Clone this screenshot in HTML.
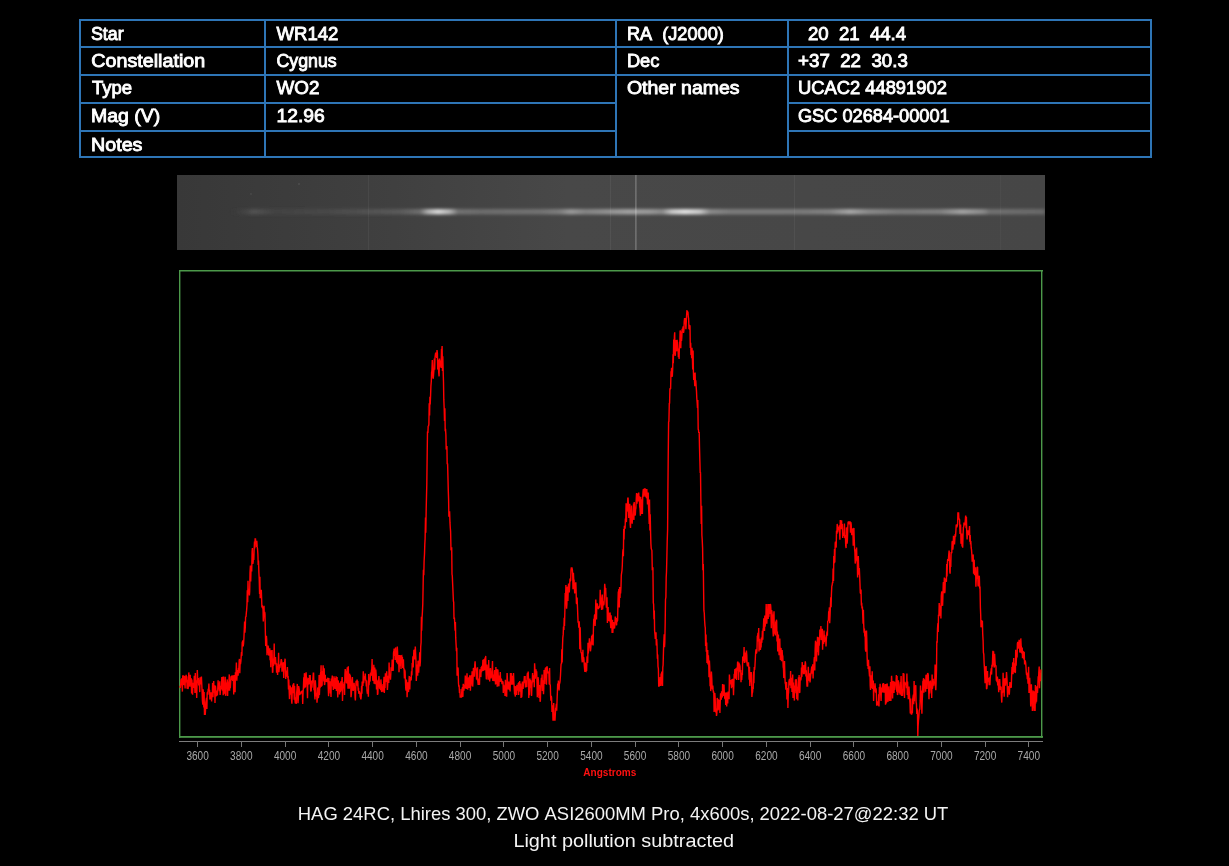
<!DOCTYPE html>
<html><head><meta charset="utf-8"><style>
html,body{margin:0;padding:0;background:#000;}
svg{display:block;font-family:"Liberation Sans",sans-serif;will-change:transform;}
</style></head><body>
<svg width="1229" height="866" viewBox="0 0 1229 866">
<rect width="1229" height="866" fill="#000"/>
<rect x="79" y="19" width="1073" height="2" fill="#2e75b6"/><rect x="79" y="46" width="1073" height="2" fill="#2e75b6"/><rect x="79" y="74" width="1073" height="2" fill="#2e75b6"/><rect x="79" y="102" width="538" height="2" fill="#2e75b6"/><rect x="787" y="102" width="365" height="2" fill="#2e75b6"/><rect x="79" y="130" width="538" height="2" fill="#2e75b6"/><rect x="787" y="130" width="365" height="2" fill="#2e75b6"/><rect x="79" y="156" width="1073" height="2" fill="#2e75b6"/><rect x="79" y="19" width="2" height="139" fill="#2e75b6"/><rect x="264" y="19" width="2" height="139" fill="#2e75b6"/><rect x="615" y="19" width="2" height="139" fill="#2e75b6"/><rect x="787" y="19" width="2" height="139" fill="#2e75b6"/><rect x="1150" y="19" width="2" height="139" fill="#2e75b6"/>
<text x="91.0" y="39.7" font-size="18" font-weight="normal" fill="#fff" text-anchor="start" textLength="32.62" lengthAdjust="spacingAndGlyphs" stroke="#fff" stroke-width="0.85">Star</text><text x="91.3" y="66.8" font-size="18" font-weight="normal" fill="#fff" text-anchor="start" textLength="113.9" lengthAdjust="spacingAndGlyphs" stroke="#fff" stroke-width="0.85">Constellation</text><text x="92.0" y="94.4" font-size="18" font-weight="normal" fill="#fff" text-anchor="start" textLength="40.08" lengthAdjust="spacingAndGlyphs" stroke="#fff" stroke-width="0.85">Type</text><text x="91.0" y="122.0" font-size="18" font-weight="normal" fill="#fff" text-anchor="start" textLength="69.21" lengthAdjust="spacingAndGlyphs" stroke="#fff" stroke-width="0.85">Mag&#160;(V)</text><text x="91.0" y="150.6" font-size="18" font-weight="normal" fill="#fff" text-anchor="start" textLength="51.43" lengthAdjust="spacingAndGlyphs" stroke="#fff" stroke-width="0.85">Notes</text><text x="276.5" y="39.7" font-size="18" font-weight="normal" fill="#fff" text-anchor="start" textLength="61.89" lengthAdjust="spacingAndGlyphs" stroke="#fff" stroke-width="0.85">WR142</text><text x="276.5" y="66.8" font-size="18" font-weight="normal" fill="#fff" text-anchor="start" textLength="60.25" lengthAdjust="spacingAndGlyphs" stroke="#fff" stroke-width="0.85">Cygnus</text><text x="276.5" y="94.4" font-size="18" font-weight="normal" fill="#fff" text-anchor="start" textLength="42.89" lengthAdjust="spacingAndGlyphs" stroke="#fff" stroke-width="0.85">WO2</text><text x="276.5" y="122.0" font-size="18" font-weight="normal" fill="#fff" text-anchor="start" textLength="48.22" lengthAdjust="spacingAndGlyphs" stroke="#fff" stroke-width="0.85">12.96</text><text x="626.9" y="39.7" font-size="18" font-weight="normal" fill="#fff" text-anchor="start" textLength="96.91" lengthAdjust="spacingAndGlyphs" stroke="#fff" stroke-width="0.85">RA&#160;&#160;(J2000)</text><text x="626.9" y="66.8" font-size="18" font-weight="normal" fill="#fff" text-anchor="start" textLength="32.53" lengthAdjust="spacingAndGlyphs" stroke="#fff" stroke-width="0.85">Dec</text><text x="626.9" y="94.4" font-size="18" font-weight="normal" fill="#fff" text-anchor="start" textLength="112.67" lengthAdjust="spacingAndGlyphs" stroke="#fff" stroke-width="0.85">Other&#160;names</text><text x="807.9" y="39.7" font-size="18" font-weight="normal" fill="#fff" text-anchor="start" textLength="98.21" lengthAdjust="spacingAndGlyphs" stroke="#fff" stroke-width="0.85">20&#160;&#160;21&#160;&#160;44.4</text><text x="798.1" y="66.8" font-size="18" font-weight="normal" fill="#fff" text-anchor="start" textLength="109.71" lengthAdjust="spacingAndGlyphs" stroke="#fff" stroke-width="0.85">+37&#160;&#160;22&#160;&#160;30.3</text><text x="797.9" y="94.4" font-size="18" font-weight="normal" fill="#fff" text-anchor="start" textLength="149.0" lengthAdjust="spacingAndGlyphs" stroke="#fff" stroke-width="0.85">UCAC2&#160;44891902</text><text x="797.9" y="122.0" font-size="18" font-weight="normal" fill="#fff" text-anchor="start" textLength="151.79" lengthAdjust="spacingAndGlyphs" stroke="#fff" stroke-width="0.85">GSC&#160;02684-00001</text><text x="297.8" y="820" font-size="18.4" font-weight="normal" fill="#f4f4f4" text-anchor="start" textLength="650.56" lengthAdjust="spacingAndGlyphs">HAG&#160;24RC,&#160;Lhires&#160;300,&#160;ZWO&#160;ASI2600MM&#160;Pro,&#160;4x600s,&#160;2022-08-27@22:32&#160;UT</text><text x="513.4" y="847" font-size="18.4" font-weight="normal" fill="#f4f4f4" text-anchor="start" textLength="220.63" lengthAdjust="spacingAndGlyphs">Light&#160;pollution&#160;subtracted</text>

<defs>
 <linearGradient id="bg" x1="0" x2="1" y1="0" y2="0">
  <stop offset="0" stop-color="#383838"/>
  <stop offset="0.25" stop-color="#404040"/>
  <stop offset="0.45" stop-color="#484848"/>
  <stop offset="1" stop-color="#464646"/>
 </linearGradient>
 <linearGradient id="band" x1="0" x2="1" y1="0" y2="0" gradientUnits="objectBoundingBox"><stop offset="0.0000" stop-color="#3a3a3a" stop-opacity="0"/><stop offset="0.0611" stop-color="#3e3e3e" stop-opacity="0.0"/><stop offset="0.0887" stop-color="#585858" stop-opacity="0.8"/><stop offset="0.1129" stop-color="#484848" stop-opacity="0.6"/><stop offset="0.1763" stop-color="#4c4c4c" stop-opacity="0.8"/><stop offset="0.2569" stop-color="#5a5a5a" stop-opacity="1"/><stop offset="0.2800" stop-color="#6e6e6e" stop-opacity="1"/><stop offset="0.2892" stop-color="#b0b0b0" stop-opacity="1"/><stop offset="0.3007" stop-color="#d8d8d8" stop-opacity="1"/><stop offset="0.3145" stop-color="#b0b0b0" stop-opacity="1"/><stop offset="0.3237" stop-color="#727272" stop-opacity="1"/><stop offset="0.3491" stop-color="#6c6c6c" stop-opacity="1"/><stop offset="0.4182" stop-color="#727272" stop-opacity="1"/><stop offset="0.4412" stop-color="#7e7e7e" stop-opacity="1"/><stop offset="0.4539" stop-color="#9a9a9a" stop-opacity="1"/><stop offset="0.4700" stop-color="#848484" stop-opacity="1"/><stop offset="0.4873" stop-color="#8c8c8c" stop-opacity="1"/><stop offset="0.5196" stop-color="#a0a0a0" stop-opacity="1"/><stop offset="0.5449" stop-color="#989898" stop-opacity="1"/><stop offset="0.5588" stop-color="#8a8a8a" stop-opacity="1"/><stop offset="0.5703" stop-color="#c8c8c8" stop-opacity="1"/><stop offset="0.5853" stop-color="#e0e0e0" stop-opacity="1"/><stop offset="0.6025" stop-color="#c8c8c8" stop-opacity="1"/><stop offset="0.6141" stop-color="#8a8a8a" stop-opacity="1"/><stop offset="0.6371" stop-color="#7c7c7c" stop-opacity="1"/><stop offset="0.7177" stop-color="#7a7a7a" stop-opacity="1"/><stop offset="0.7523" stop-color="#828282" stop-opacity="1"/><stop offset="0.7753" stop-color="#a6a6a6" stop-opacity="1"/><stop offset="0.7961" stop-color="#8a8a8a" stop-opacity="1"/><stop offset="0.8329" stop-color="#7a7a7a" stop-opacity="1"/><stop offset="0.8790" stop-color="#808080" stop-opacity="1"/><stop offset="0.9044" stop-color="#a2a2a2" stop-opacity="1"/><stop offset="0.9286" stop-color="#8a8a8a" stop-opacity="1"/><stop offset="0.9366" stop-color="#707070" stop-opacity="1"/><stop offset="1.0000" stop-color="#686868" stop-opacity="1"/></linearGradient>
 <filter id="b2" x="-10%" y="-300%" width="120%" height="700%"><feGaussianBlur stdDeviation="1.6"/></filter>
 <clipPath id="sc"><rect x="177" y="175" width="868" height="75"/></clipPath>
</defs>
<rect x="177" y="175" width="868" height="75" fill="url(#bg)"/>
<g clip-path="url(#sc)">
 <rect x="177" y="209" width="868" height="5.5" fill="url(#band)" filter="url(#b2)"/>
 <rect x="635.3" y="175" width="1.2" height="75" fill="#fff" fill-opacity="0.3"/>
 <rect x="610" y="175" width="1" height="75" fill="#fff" fill-opacity="0.06"/>
 <rect x="368" y="175" width="1" height="75" fill="#fff" fill-opacity="0.05"/>
 <rect x="794" y="175" width="1" height="75" fill="#fff" fill-opacity="0.05"/>
 <rect x="1000" y="175" width="1" height="75" fill="#fff" fill-opacity="0.03"/>
 <circle cx="251" cy="194" r="0.9" fill="#4a4a4a"/>
 <circle cx="299" cy="184" r="1" fill="#4e4e4e"/>
</g>


<g fill="#4c994a"><rect x="179" y="270" width="864" height="1.5"/><rect x="179" y="736" width="864" height="1.8"/><rect x="179" y="270" width="1.4" height="467.8"/><rect x="1041" y="270" width="1.4" height="467.8"/></g>
<polyline points="180.0,686.0 180.3,688.0 180.7,684.3 181.0,679.2 181.4,682.5 181.7,678.4 182.0,682.8 182.4,691.6 182.7,676.5 183.1,675.3 183.4,684.7 183.7,684.5 184.1,683.2 184.4,675.9 184.8,681.8 185.1,688.5 185.4,676.3 185.8,682.4 186.1,674.9 186.5,680.1 186.8,676.2 187.1,688.8 187.5,679.8 187.8,688.9 188.2,688.2 188.5,683.3 188.8,672.4 189.2,679.7 189.5,683.9 189.9,686.7 190.2,674.8 190.5,683.3 190.9,678.2 191.2,678.8 191.6,693.5 191.9,679.6 192.2,687.9 192.6,694.7 192.9,682.8 193.3,687.6 193.6,686.9 193.9,686.5 194.3,675.8 194.6,683.7 195.0,693.0 195.3,672.9 195.6,692.8 196.0,687.4 196.3,680.3 196.7,698.0 197.0,686.8 197.3,670.1 197.7,679.6 198.0,683.2 198.4,678.0 198.7,685.5 199.0,679.7 199.4,684.3 199.7,692.1 200.1,677.2 200.4,682.7 200.7,678.4 201.1,684.5 201.4,676.5 201.8,684.8 202.1,691.6 202.4,700.4 202.8,704.8 203.1,689.3 203.5,694.9 203.8,707.4 204.1,691.9 204.5,715.0 204.8,707.2 205.2,715.0 205.5,710.6 205.8,702.4 206.2,699.8 206.5,697.9 206.9,709.1 207.2,693.1 207.5,692.0 207.9,694.6 208.2,688.8 208.6,689.9 208.9,683.6 209.2,691.2 209.6,689.8 209.9,699.6 210.3,696.1 210.6,692.3 210.9,697.2 211.3,692.8 211.6,701.5 212.0,692.3 212.3,696.6 212.6,682.9 213.0,697.3 213.3,684.7 213.7,681.0 214.0,692.8 214.3,685.3 214.7,690.2 215.0,703.0 215.4,685.5 215.7,688.1 216.0,695.5 216.4,696.3 216.7,691.2 217.1,691.1 217.4,695.4 217.7,690.5 218.1,680.4 218.4,686.9 218.8,689.3 219.1,683.3 219.4,691.2 219.8,681.2 220.1,695.0 220.5,690.0 220.8,689.6 221.1,685.9 221.5,688.8 221.8,677.1 222.2,681.8 222.5,690.7 222.8,676.7 223.2,695.2 223.5,676.5 223.9,694.3 224.2,683.5 224.5,693.5 224.9,690.0 225.2,676.7 225.6,695.7 225.9,694.8 226.2,682.7 226.6,683.3 226.9,683.2 227.3,679.4 227.6,696.0 227.9,686.3 228.3,690.7 228.6,683.7 229.0,680.9 229.3,674.4 229.6,690.8 230.0,680.6 230.3,688.1 230.7,682.0 231.0,676.3 231.3,678.3 231.7,675.6 232.0,680.0 232.4,678.1 232.7,680.8 233.0,675.3 233.4,678.2 233.7,694.5 234.1,676.7 234.4,675.0 234.7,686.0 235.1,692.3 235.4,672.2 235.8,678.8 236.1,671.8 236.4,662.4 236.8,680.7 237.1,674.1 237.5,675.2 237.8,670.1 238.1,675.8 238.5,668.0 238.8,669.8 239.2,660.3 239.5,658.9 239.8,673.3 240.2,660.6 240.5,664.2 240.9,661.3 241.2,656.1 241.5,652.0 241.9,655.9 242.2,642.7 242.6,641.6 242.9,640.3 243.2,646.3 243.6,643.3 243.9,638.3 244.3,629.1 244.6,621.6 244.9,632.8 245.3,627.3 245.6,616.5 246.0,617.0 246.3,613.1 246.6,610.4 247.0,604.8 247.3,590.3 247.7,602.2 248.0,580.7 248.3,593.1 248.7,588.9 249.0,590.5 249.4,595.5 249.7,591.2 250.0,572.6 250.4,565.6 250.7,581.5 251.1,566.8 251.4,569.1 251.7,571.6 252.1,551.9 252.4,548.0 252.8,563.9 253.1,562.4 253.4,559.3 253.8,559.9 254.1,550.5 254.5,541.5 254.8,548.4 255.1,539.0 255.5,539.0 255.8,542.2 256.2,540.7 256.5,547.0 256.8,540.9 257.2,546.9 257.5,548.5 257.9,554.3 258.2,565.1 258.5,560.5 258.9,572.8 259.2,578.5 259.6,594.0 259.9,576.8 260.2,598.3 260.6,593.5 260.9,596.4 261.3,589.7 261.6,597.9 261.9,607.4 262.3,605.2 262.6,608.0 263.0,608.3 263.3,621.5 263.6,617.8 264.0,605.7 264.3,616.7 264.7,611.8 265.0,614.0 265.3,629.4 265.7,646.1 266.0,641.0 266.4,635.9 266.7,639.7 267.0,655.2 267.4,648.7 267.7,648.4 268.1,645.5 268.4,647.9 268.7,655.4 269.1,654.6 269.4,654.3 269.8,648.3 270.1,660.2 270.4,654.4 270.8,667.3 271.1,650.3 271.5,658.9 271.8,658.6 272.1,650.0 272.5,672.7 272.8,672.0 273.2,658.5 273.5,665.9 273.8,661.4 274.2,643.4 274.5,659.9 274.9,661.5 275.2,664.4 275.5,657.1 275.9,663.5 276.2,663.1 276.6,672.6 276.9,666.6 277.2,666.6 277.6,675.0 277.9,663.5 278.3,664.2 278.6,652.8 278.9,672.1 279.3,667.9 279.6,667.7 280.0,667.2 280.3,664.3 280.6,664.9 281.0,660.9 281.3,659.1 281.7,661.1 282.0,671.8 282.3,668.0 282.7,664.6 283.0,662.5 283.4,663.0 283.7,677.9 284.0,669.3 284.4,664.2 284.7,662.2 285.1,658.7 285.4,668.6 285.7,678.9 286.1,670.5 286.4,671.6 286.8,672.4 287.1,676.6 287.4,667.0 287.8,678.3 288.1,676.0 288.5,689.4 288.8,679.4 289.1,689.5 289.5,699.1 289.8,687.0 290.2,685.6 290.5,694.5 290.8,693.5 291.2,687.2 291.5,698.9 291.9,703.8 292.2,691.6 292.5,690.0 292.9,684.6 293.2,693.1 293.6,683.2 293.9,685.4 294.2,699.7 294.6,685.9 294.9,699.2 295.3,703.5 295.6,697.2 295.9,699.6 296.3,703.9 296.6,693.3 297.0,689.2 297.3,683.9 297.6,692.5 298.0,703.3 298.3,699.1 298.7,686.1 299.0,687.8 299.3,690.1 299.7,695.2 300.0,692.5 300.4,693.5 300.7,694.2 301.0,692.6 301.4,691.2 301.7,693.1 302.1,691.0 302.4,690.6 302.7,703.9 303.1,691.9 303.4,687.5 303.8,677.2 304.1,688.6 304.4,673.3 304.8,674.6 305.1,687.3 305.5,686.6 305.8,680.2 306.1,672.2 306.5,680.9 306.8,677.3 307.2,687.8 307.5,698.3 307.8,683.9 308.2,679.7 308.5,678.1 308.9,683.9 309.2,684.1 309.5,675.0 309.9,682.6 310.2,675.0 310.6,689.9 310.9,691.0 311.2,690.8 311.6,680.5 311.9,687.8 312.3,682.8 312.6,680.9 312.9,679.4 313.3,673.1 313.6,673.1 314.0,690.3 314.3,687.0 314.6,693.3 315.0,699.5 315.3,680.2 315.7,686.2 316.0,692.6 316.3,696.3 316.7,693.1 317.0,702.7 317.4,697.3 317.7,688.3 318.0,687.5 318.4,698.1 318.7,695.5 319.1,675.0 319.4,695.0 319.7,687.4 320.1,687.4 320.4,674.4 320.8,671.9 321.1,665.3 321.4,686.7 321.8,671.7 322.1,685.7 322.5,671.0 322.8,676.2 323.1,665.3 323.5,671.1 323.8,681.4 324.2,668.2 324.5,685.0 324.8,683.8 325.2,674.8 325.5,679.3 325.9,680.2 326.2,681.8 326.5,679.7 326.9,679.0 327.2,682.1 327.6,679.2 327.9,677.7 328.2,687.2 328.6,696.3 328.9,678.0 329.3,687.9 329.6,684.1 329.9,681.3 330.3,693.6 330.6,685.2 331.0,696.9 331.3,678.5 331.6,685.5 332.0,679.0 332.3,675.6 332.7,686.5 333.0,683.1 333.3,690.0 333.7,685.4 334.0,676.2 334.4,683.5 334.7,684.0 335.0,689.0 335.4,678.0 335.7,684.8 336.1,676.2 336.4,691.0 336.7,679.4 337.1,677.0 337.4,689.0 337.8,697.4 338.1,680.3 338.4,682.4 338.8,686.1 339.1,683.6 339.5,694.4 339.8,684.3 340.1,682.9 340.5,692.2 340.8,681.3 341.2,690.7 341.5,682.2 341.8,680.7 342.2,677.0 342.5,700.9 342.9,686.4 343.2,688.5 343.5,683.7 343.9,685.3 344.2,681.9 344.6,695.1 344.9,674.9 345.2,669.1 345.6,672.8 345.9,671.2 346.3,682.4 346.6,683.3 346.9,672.5 347.3,667.2 347.6,675.9 348.0,688.7 348.3,666.2 348.6,683.4 349.0,673.6 349.3,688.7 349.7,673.8 350.0,681.9 350.3,675.2 350.7,679.9 351.0,697.2 351.4,693.6 351.7,684.9 352.0,683.2 352.4,677.1 352.7,686.6 353.1,690.9 353.4,690.0 353.7,688.2 354.1,682.7 354.4,687.3 354.8,687.6 355.1,697.8 355.4,700.4 355.8,686.8 356.1,680.8 356.5,685.3 356.8,682.7 357.1,679.6 357.5,686.3 357.8,681.0 358.2,690.8 358.5,687.9 358.8,693.8 359.2,691.2 359.5,691.8 359.9,693.4 360.2,697.5 360.5,697.1 360.9,699.4 361.2,696.6 361.6,685.7 361.9,693.7 362.2,681.6 362.6,685.1 362.9,686.0 363.3,671.3 363.6,683.2 363.9,680.9 364.3,677.5 364.6,677.0 365.0,677.7 365.3,673.5 365.6,680.2 366.0,680.3 366.3,686.4 366.7,680.4 367.0,690.7 367.3,692.9 367.7,692.6 368.0,689.6 368.4,696.8 368.7,674.1 369.0,685.3 369.4,681.0 369.7,681.3 370.1,681.0 370.4,673.3 370.7,673.2 371.1,675.8 371.4,670.9 371.8,668.6 372.1,659.1 372.4,672.7 372.8,680.8 373.1,679.4 373.5,676.2 373.8,664.7 374.1,683.7 374.5,679.2 374.8,667.4 375.2,684.3 375.5,670.3 375.8,669.6 376.2,674.9 376.5,689.4 376.9,679.7 377.2,685.5 377.5,694.9 377.9,693.5 378.2,681.6 378.6,680.7 378.9,676.1 379.2,680.7 379.6,688.6 379.9,688.2 380.3,683.5 380.6,690.3 380.9,679.4 381.3,685.6 381.6,692.0 382.0,690.0 382.3,691.7 382.6,688.6 383.0,684.1 383.3,691.7 383.7,682.6 384.0,676.8 384.3,693.0 384.7,685.9 385.0,688.0 385.4,673.2 385.7,681.9 386.0,680.4 386.4,678.6 386.7,671.3 387.1,682.6 387.4,690.0 387.7,685.2 388.1,675.8 388.4,678.2 388.8,683.0 389.1,662.5 389.4,675.0 389.8,677.6 390.1,675.0 390.5,679.8 390.8,674.2 391.1,667.3 391.5,668.3 391.8,670.8 392.2,659.6 392.5,662.1 392.8,666.1 393.2,670.9 393.5,653.0 393.9,650.7 394.2,648.5 394.5,656.0 394.9,648.9 395.2,660.1 395.6,647.4 395.9,653.4 396.2,653.4 396.6,661.9 396.9,662.3 397.3,646.5 397.6,652.2 397.9,664.2 398.3,659.8 398.6,655.1 399.0,672.3 399.3,664.9 399.6,663.7 400.0,655.1 400.3,666.3 400.7,658.3 401.0,668.9 401.3,655.9 401.7,655.7 402.0,663.0 402.4,656.8 402.7,668.1 403.0,666.9 403.4,659.3 403.7,668.2 404.1,668.9 404.4,678.4 404.7,669.6 405.1,671.5 405.4,680.6 405.8,688.9 406.1,690.6 406.4,679.5 406.8,685.4 407.1,697.3 407.5,686.2 407.8,682.4 408.1,690.3 408.5,692.0 408.8,685.6 409.2,676.6 409.5,676.7 409.8,689.4 410.2,677.0 410.5,680.3 410.9,679.9 411.2,680.3 411.5,671.3 411.9,675.4 412.2,663.0 412.6,663.9 412.9,656.2 413.2,667.6 413.6,656.3 413.9,649.9 414.3,652.1 414.6,649.7 414.9,659.6 415.3,646.5 415.6,652.7 416.0,660.8 416.3,681.0 416.6,674.4 417.0,664.5 417.3,669.1 417.7,675.8 418.0,660.8 418.3,661.3 418.7,672.6 419.0,665.4 419.4,664.0 419.7,652.2 420.0,666.4 420.4,660.9 420.7,646.8 421.1,642.4 421.4,616.8 421.7,630.7 422.1,617.1 422.4,612.4 422.8,603.7 423.1,587.2 423.4,569.8 423.8,575.3 424.1,561.0 424.5,554.1 424.8,544.4 425.1,538.9 425.5,517.4 425.8,532.8 426.2,508.8 426.5,496.4 426.8,484.5 427.2,453.3 427.5,431.5 427.9,432.9 428.2,425.9 428.5,426.3 428.9,424.2 429.2,403.2 429.6,415.4 429.9,396.7 430.2,404.4 430.6,394.9 430.9,386.1 431.3,381.3 431.6,372.2 431.9,371.3 432.3,360.1 432.6,368.9 433.0,378.5 433.3,378.1 433.6,374.0 434.0,369.1 434.3,358.6 434.7,369.8 435.0,357.5 435.3,355.1 435.7,352.5 436.0,357.1 436.4,355.1 436.7,357.8 437.0,350.1 437.4,353.1 437.7,369.6 438.1,359.7 438.4,363.3 438.7,372.7 439.1,376.4 439.4,358.5 439.8,362.1 440.1,366.6 440.4,361.2 440.8,360.5 441.1,368.0 441.5,349.0 441.8,351.5 442.1,346.0 442.5,370.9 442.8,356.3 443.2,372.4 443.5,381.9 443.8,399.4 444.2,408.7 444.5,420.9 444.9,408.3 445.2,431.2 445.5,428.9 445.9,434.7 446.2,449.6 446.6,447.2 446.9,446.0 447.2,464.3 447.6,463.5 447.9,475.4 448.3,491.0 448.6,499.8 448.9,516.8 449.3,512.5 449.6,511.3 450.0,522.9 450.3,528.0 450.6,531.6 451.0,550.3 451.3,550.0 451.7,547.3 452.0,574.3 452.3,575.9 452.7,585.0 453.0,591.9 453.4,601.1 453.7,602.1 454.0,619.1 454.4,617.5 454.7,622.4 455.1,630.7 455.4,622.0 455.7,637.4 456.1,644.7 456.4,651.2 456.8,647.7 457.1,675.7 457.4,672.2 457.8,667.5 458.1,668.5 458.5,683.2 458.8,686.6 459.1,685.2 459.5,693.0 459.8,689.0 460.2,697.0 460.5,697.0 460.8,697.0 461.2,697.0 461.5,697.0 461.9,688.7 462.2,690.6 462.5,687.0 462.9,696.9 463.2,683.8 463.6,687.0 463.9,690.7 464.2,685.8 464.6,684.7 464.9,688.5 465.3,675.6 465.6,678.1 465.9,685.7 466.3,688.8 466.6,686.0 467.0,673.3 467.3,680.6 467.6,689.6 468.0,686.9 468.3,682.4 468.7,677.4 469.0,688.0 469.3,679.8 469.7,675.4 470.0,676.2 470.4,690.8 470.7,681.2 471.0,686.3 471.4,675.1 471.7,684.6 472.1,671.3 472.4,673.8 472.7,686.6 473.1,677.5 473.4,667.9 473.8,668.8 474.1,670.8 474.4,676.7 474.8,664.7 475.1,661.2 475.5,668.7 475.8,667.9 476.1,670.0 476.5,679.5 476.8,673.4 477.2,680.2 477.5,667.3 477.8,681.0 478.2,684.9 478.5,680.6 478.9,679.5 479.2,678.6 479.5,684.9 479.9,669.3 480.2,671.8 480.6,676.2 480.9,676.3 481.2,667.1 481.6,672.3 481.9,665.7 482.3,670.9 482.6,667.1 482.9,659.8 483.3,668.2 483.6,670.8 484.0,659.0 484.3,663.5 484.6,670.1 485.0,657.5 485.3,664.7 485.7,655.9 486.0,671.4 486.3,678.7 486.7,678.8 487.0,664.5 487.4,670.2 487.7,668.0 488.0,670.7 488.4,679.8 488.7,660.1 489.1,677.8 489.4,672.3 489.7,681.4 490.1,673.1 490.4,668.1 490.8,673.7 491.1,678.4 491.4,675.1 491.8,677.1 492.1,670.7 492.5,661.1 492.8,681.0 493.1,679.1 493.5,675.6 493.8,674.6 494.2,681.2 494.5,671.0 494.8,670.1 495.2,674.7 495.5,684.4 495.9,667.0 496.2,684.0 496.5,671.8 496.9,669.0 497.2,686.7 497.6,678.4 497.9,669.5 498.2,675.8 498.6,684.6 498.9,686.3 499.3,675.6 499.6,681.0 499.9,681.1 500.3,672.1 500.6,680.6 501.0,680.9 501.3,678.6 501.6,680.2 502.0,683.5 502.3,683.5 502.7,681.7 503.0,681.5 503.3,692.9 503.7,684.8 504.0,688.8 504.4,689.8 504.7,686.2 505.0,696.0 505.4,679.8 505.7,693.1 506.1,683.9 506.4,696.0 506.7,696.0 507.1,673.1 507.4,678.5 507.8,688.3 508.1,689.4 508.4,688.2 508.8,681.6 509.1,687.0 509.5,689.8 509.8,684.0 510.1,691.4 510.5,673.1 510.8,683.6 511.2,673.1 511.5,684.7 511.8,679.3 512.2,675.8 512.5,684.7 512.9,677.9 513.2,677.0 513.5,673.1 513.9,683.3 514.2,687.4 514.6,694.4 514.9,685.9 515.2,696.6 515.6,689.9 515.9,686.4 516.3,691.3 516.6,695.0 516.9,684.7 517.3,686.8 517.6,688.5 518.0,690.7 518.3,683.1 518.6,695.1 519.0,682.1 519.3,687.9 519.7,681.0 520.0,690.7 520.3,691.5 520.7,683.4 521.0,697.9 521.4,687.5 521.7,697.2 522.0,692.6 522.4,681.6 522.7,683.6 523.1,688.9 523.4,683.9 523.7,682.7 524.1,680.1 524.4,676.0 524.8,682.7 525.1,676.0 525.4,687.5 525.8,680.4 526.1,681.3 526.5,684.8 526.8,687.2 527.1,675.8 527.5,672.8 527.8,677.6 528.2,671.6 528.5,680.2 528.8,698.0 529.2,684.1 529.5,695.3 529.9,678.6 530.2,687.6 530.5,680.2 530.9,682.5 531.2,686.5 531.6,695.9 531.9,685.2 532.2,682.2 532.6,673.0 532.9,682.2 533.3,675.3 533.6,682.3 533.9,675.8 534.3,687.3 534.6,663.2 535.0,670.6 535.3,678.7 535.6,672.3 536.0,669.2 536.3,674.3 536.7,671.2 537.0,681.7 537.3,697.2 537.7,692.7 538.0,677.2 538.4,680.4 538.7,686.7 539.0,698.1 539.4,685.0 539.7,690.5 540.1,701.8 540.4,700.2 540.7,690.4 541.1,681.4 541.4,677.7 541.8,683.9 542.1,674.4 542.4,690.9 542.8,680.3 543.1,686.0 543.5,694.3 543.8,688.3 544.1,669.9 544.5,682.7 544.8,683.9 545.2,669.6 545.5,667.8 545.8,673.9 546.2,667.0 546.5,684.7 546.9,667.0 547.2,667.0 547.5,671.0 547.9,671.6 548.2,673.5 548.6,672.9 548.9,672.9 549.2,684.6 549.6,667.9 549.9,685.0 550.3,684.6 550.6,695.6 550.9,700.7 551.3,695.8 551.6,698.1 552.0,711.9 552.3,710.2 552.6,705.2 553.0,720.0 553.3,720.0 553.7,703.0 554.0,716.8 554.3,720.0 554.7,720.0 555.0,720.0 555.4,712.8 555.7,707.8 556.0,708.8 556.4,703.7 556.7,710.8 557.1,699.3 557.4,692.0 557.7,683.6 558.1,689.0 558.4,680.6 558.8,686.1 559.1,690.5 559.4,683.6 559.8,683.2 560.1,681.0 560.5,675.0 560.8,668.7 561.1,663.6 561.5,664.1 561.8,649.2 562.2,662.5 562.5,646.3 562.8,637.9 563.2,634.4 563.5,626.6 563.9,630.0 564.2,617.8 564.5,626.1 564.9,609.2 565.2,593.0 565.6,598.1 565.9,585.0 566.2,599.4 566.6,608.7 566.9,604.2 567.3,587.4 567.6,587.1 567.9,601.1 568.3,587.6 568.6,583.6 569.0,587.2 569.3,592.5 569.6,586.1 570.0,578.6 570.3,581.2 570.7,580.1 571.0,569.8 571.3,568.0 571.7,568.0 572.0,568.0 572.4,570.1 572.7,574.7 573.0,589.2 573.4,572.7 573.7,579.1 574.1,580.4 574.4,587.8 574.7,593.5 575.1,584.2 575.4,584.5 575.8,582.3 576.1,590.4 576.4,603.2 576.8,603.8 577.1,597.6 577.5,607.5 577.8,615.7 578.1,622.8 578.5,621.8 578.8,627.8 579.2,621.4 579.5,628.3 579.8,649.3 580.2,627.3 580.5,642.4 580.9,651.4 581.2,653.0 581.5,652.3 581.9,659.0 582.2,661.7 582.6,661.6 582.9,649.7 583.2,661.4 583.6,657.2 583.9,659.0 584.3,665.8 584.6,669.1 584.9,671.8 585.3,662.4 585.6,671.3 586.0,671.5 586.3,668.3 586.6,671.0 587.0,657.2 587.3,657.3 587.7,662.9 588.0,642.7 588.3,653.5 588.7,647.3 589.0,646.5 589.4,638.4 589.7,641.9 590.0,645.2 590.4,651.3 590.7,649.4 591.1,643.6 591.4,640.9 591.7,635.8 592.1,644.8 592.4,634.6 592.8,639.0 593.1,645.5 593.4,629.3 593.8,618.7 594.1,623.4 594.5,615.7 594.8,614.3 595.1,626.0 595.5,614.9 595.8,599.5 596.2,614.0 596.5,619.4 596.8,604.7 597.2,603.3 597.5,604.6 597.9,607.7 598.2,608.6 598.5,608.6 598.9,607.5 599.2,606.3 599.6,607.8 599.9,604.0 600.2,589.7 600.6,600.5 600.9,604.5 601.3,600.8 601.6,610.0 601.9,598.3 602.3,594.5 602.6,609.4 603.0,603.3 603.3,601.2 603.6,605.2 604.0,604.2 604.3,597.4 604.7,583.8 605.0,587.0 605.3,588.9 605.7,587.9 606.0,599.0 606.4,607.8 606.7,600.3 607.0,597.3 607.4,623.0 607.7,610.8 608.1,607.1 608.4,619.8 608.7,620.8 609.1,612.9 609.4,621.5 609.8,613.9 610.1,612.5 610.4,622.4 610.8,628.1 611.1,615.2 611.5,623.7 611.8,620.1 612.1,632.9 612.5,619.7 612.8,632.9 613.2,624.9 613.5,622.0 613.8,628.2 614.2,627.6 614.5,628.5 614.9,624.6 615.2,617.2 615.5,617.2 615.9,622.5 616.2,620.7 616.6,625.4 616.9,618.1 617.2,621.4 617.6,620.4 617.9,605.9 618.3,591.4 618.6,592.3 618.9,589.0 619.3,607.5 619.6,587.1 620.0,598.0 620.3,588.5 620.6,593.4 621.0,586.8 621.3,575.2 621.7,572.3 622.0,570.5 622.3,565.5 622.7,553.0 623.0,549.4 623.4,556.3 623.7,529.0 624.0,539.5 624.4,525.8 624.7,527.7 625.1,527.8 625.4,518.4 625.7,522.4 626.1,503.3 626.4,522.0 626.8,507.4 627.1,511.8 627.4,506.8 627.8,498.2 628.1,498.2 628.5,507.1 628.8,518.0 629.1,511.7 629.5,514.7 629.8,503.8 630.2,524.1 630.5,527.9 630.8,515.9 631.2,513.6 631.5,505.5 631.9,520.2 632.2,523.6 632.5,516.1 632.9,519.2 633.2,514.4 633.6,503.5 633.9,520.0 634.2,502.0 634.6,509.5 634.9,513.5 635.3,515.5 635.6,509.7 635.9,508.2 636.3,497.7 636.6,493.1 637.0,503.7 637.3,498.0 637.6,493.6 638.0,495.3 638.3,501.4 638.7,492.5 639.0,498.7 639.3,496.2 639.7,507.0 640.0,508.2 640.4,515.8 640.7,496.7 641.0,501.9 641.4,513.9 641.7,503.6 642.1,499.2 642.4,513.9 642.7,497.0 643.1,491.1 643.4,489.0 643.8,496.6 644.1,493.2 644.4,489.0 644.8,489.0 645.1,489.0 645.5,496.7 645.8,489.0 646.1,496.1 646.5,498.2 646.8,489.0 647.2,497.2 647.5,504.5 647.8,498.2 648.2,492.5 648.5,505.8 648.9,514.6 649.2,524.1 649.5,499.4 649.9,530.6 650.2,514.2 650.6,533.2 650.9,543.7 651.2,548.3 651.6,549.6 651.9,550.5 652.3,570.3 652.6,570.0 652.9,567.3 653.3,602.8 653.6,604.0 654.0,619.2 654.3,610.4 654.6,630.6 655.0,634.5 655.3,638.9 655.7,634.1 656.0,632.3 656.3,645.6 656.7,639.0 657.0,645.0 657.4,658.8 657.7,654.4 658.0,666.4 658.4,668.8 658.7,686.0 659.1,686.0 659.4,679.2 659.7,686.0 660.1,677.0 660.4,679.4 660.8,686.0 661.1,673.4 661.4,679.2 661.8,671.5 662.1,682.4 662.5,686.0 662.8,667.3 663.1,665.2 663.5,650.2 663.8,642.0 664.2,634.3 664.5,647.2 664.8,642.7 665.2,621.9 665.5,599.5 665.9,597.1 666.2,577.4 666.5,571.7 666.9,555.4 667.2,541.8 667.6,529.4 667.9,490.2 668.2,458.9 668.6,422.0 668.9,421.4 669.3,403.4 669.6,403.2 669.9,388.2 670.3,389.2 670.6,388.6 671.0,371.3 671.3,373.1 671.6,367.9 672.0,374.6 672.3,376.8 672.7,368.5 673.0,354.2 673.3,363.2 673.7,339.6 674.0,354.1 674.4,336.2 674.7,332.2 675.0,355.7 675.4,355.1 675.7,340.1 676.1,351.1 676.4,350.0 676.7,351.3 677.1,339.7 677.4,344.0 677.8,350.6 678.1,350.1 678.4,357.3 678.8,348.6 679.1,358.9 679.5,341.8 679.8,345.9 680.1,330.6 680.5,331.1 680.8,348.2 681.2,332.1 681.5,341.0 681.8,337.4 682.2,328.7 682.5,331.9 682.9,328.0 683.2,326.3 683.5,333.0 683.9,330.4 684.2,321.6 684.6,318.0 684.9,323.8 685.2,318.1 685.6,323.9 685.9,329.1 686.3,321.1 686.6,315.4 686.9,311.0 687.3,311.1 687.6,312.8 688.0,312.6 688.3,317.0 688.6,318.3 689.0,329.2 689.3,324.9 689.7,329.6 690.0,325.2 690.3,348.1 690.7,342.8 691.0,355.0 691.4,351.5 691.7,358.1 692.0,347.7 692.4,357.6 692.7,369.6 693.1,350.6 693.4,371.2 693.7,379.9 694.1,373.0 694.4,378.7 694.8,386.2 695.1,372.4 695.4,384.1 695.8,380.3 696.1,385.6 696.5,391.1 696.8,398.2 697.1,401.8 697.5,408.0 697.8,400.1 698.2,429.4 698.5,429.9 698.8,433.0 699.2,432.0 699.5,446.9 699.9,461.5 700.2,473.0 700.5,472.2 700.9,502.4 701.2,524.0 701.6,505.8 701.9,535.2 702.2,539.5 702.6,548.1 702.9,570.2 703.3,564.1 703.6,590.0 703.9,610.4 704.3,613.2 704.6,620.5 705.0,626.0 705.3,627.8 705.6,646.1 706.0,634.6 706.3,651.8 706.7,642.6 707.0,663.1 707.3,659.6 707.7,650.0 708.0,664.6 708.4,655.4 708.7,661.5 709.0,677.3 709.4,660.5 709.7,666.4 710.1,686.2 710.4,678.4 710.7,691.1 711.1,680.2 711.4,671.6 711.8,678.6 712.1,687.6 712.4,689.5 712.8,685.5 713.1,689.9 713.5,692.9 713.8,691.6 714.1,712.0 714.5,699.5 714.8,693.1 715.2,698.5 715.5,710.4 715.8,712.3 716.2,708.6 716.5,716.0 716.9,713.0 717.2,697.9 717.5,699.2 717.9,710.5 718.2,699.3 718.6,704.1 718.9,709.6 719.2,705.3 719.6,699.8 719.9,713.1 720.3,700.1 720.6,693.4 720.9,699.8 721.3,698.8 721.6,691.3 722.0,696.6 722.3,696.7 722.6,684.0 723.0,696.0 723.3,693.9 723.7,692.7 724.0,684.4 724.3,693.0 724.7,697.7 725.0,699.1 725.4,693.0 725.7,704.9 726.0,692.3 726.4,697.2 726.7,706.6 727.1,692.5 727.4,693.0 727.7,703.6 728.1,691.4 728.4,692.3 728.8,694.0 729.1,699.3 729.4,674.5 729.8,680.6 730.1,680.8 730.5,680.0 730.8,684.5 731.1,682.5 731.5,688.3 731.8,679.3 732.2,684.3 732.5,686.8 732.8,678.9 733.2,684.8 733.5,695.2 733.9,683.7 734.2,674.1 734.5,675.4 734.9,669.1 735.2,674.5 735.6,678.7 735.9,668.3 736.2,670.0 736.6,679.9 736.9,667.5 737.3,670.7 737.6,661.7 737.9,662.0 738.3,663.9 738.6,679.9 739.0,662.7 739.3,665.0 739.6,664.4 740.0,666.3 740.3,672.1 740.7,670.0 741.0,682.2 741.3,674.5 741.7,680.0 742.0,673.7 742.4,673.9 742.7,656.5 743.0,661.0 743.4,660.2 743.7,657.3 744.1,647.1 744.4,663.1 744.7,653.2 745.1,652.5 745.4,655.0 745.8,656.8 746.1,662.4 746.4,650.5 746.8,655.1 747.1,664.0 747.5,666.3 747.8,665.1 748.1,663.9 748.5,662.3 748.8,669.7 749.2,679.6 749.5,666.8 749.8,686.0 750.2,680.9 750.5,672.3 750.9,681.9 751.2,672.0 751.5,675.2 751.9,697.0 752.2,693.2 752.6,692.0 752.9,687.0 753.2,689.0 753.6,671.5 753.9,683.3 754.3,667.0 754.6,670.0 754.9,666.8 755.3,659.2 755.6,653.0 756.0,649.3 756.3,653.3 756.6,653.0 757.0,650.2 757.3,636.3 757.7,635.8 758.0,632.9 758.3,641.4 758.7,627.9 759.0,651.6 759.4,639.3 759.7,639.6 760.0,646.9 760.4,649.9 760.7,646.6 761.1,647.4 761.4,637.6 761.7,642.9 762.1,639.4 762.4,630.8 762.8,639.8 763.1,629.4 763.4,627.4 763.8,618.4 764.1,622.7 764.5,631.0 764.8,615.5 765.1,626.6 765.5,623.2 765.8,620.7 766.2,604.0 766.5,617.1 766.8,623.7 767.2,612.3 767.5,618.2 767.9,604.0 768.2,618.9 768.5,608.3 768.9,616.9 769.2,604.0 769.6,613.9 769.9,607.1 770.2,604.0 770.6,604.7 770.9,609.2 771.3,628.2 771.6,610.2 771.9,611.8 772.3,616.6 772.6,614.5 773.0,631.3 773.3,636.4 773.6,617.5 774.0,611.3 774.3,632.3 774.7,633.4 775.0,632.9 775.3,635.5 775.7,621.6 776.0,625.6 776.4,619.7 776.7,621.3 777.0,641.4 777.4,631.6 777.7,651.6 778.1,638.7 778.4,634.6 778.7,646.7 779.1,655.3 779.4,649.1 779.8,638.6 780.1,652.2 780.4,660.0 780.8,648.4 781.1,648.5 781.5,661.2 781.8,656.7 782.1,650.0 782.5,656.1 782.8,656.1 783.2,667.1 783.5,668.6 783.8,678.1 784.2,675.7 784.5,660.9 784.9,676.1 785.2,683.3 785.5,683.4 785.9,689.6 786.2,682.7 786.6,682.2 786.9,699.4 787.2,691.2 787.6,687.9 787.9,708.1 788.3,694.3 788.6,692.5 788.9,681.9 789.3,679.8 789.6,678.9 790.0,682.8 790.3,685.4 790.6,670.9 791.0,688.3 791.3,677.8 791.7,680.1 792.0,692.0 792.3,686.6 792.7,674.5 793.0,698.1 793.4,682.5 793.7,691.7 794.0,691.7 794.4,700.6 794.7,685.5 795.1,693.2 795.4,679.5 795.7,690.7 796.1,679.0 796.4,681.3 796.8,699.3 797.1,690.1 797.4,686.7 797.8,700.6 798.1,687.2 798.5,677.3 798.8,688.6 799.1,674.9 799.5,692.4 799.8,692.8 800.2,678.7 800.5,677.3 800.8,680.5 801.2,677.1 801.5,667.4 801.9,676.9 802.2,662.1 802.5,666.5 802.9,670.5 803.2,670.5 803.6,674.1 803.9,665.0 804.2,674.2 804.6,669.5 804.9,666.1 805.3,661.4 805.6,664.0 805.9,676.4 806.3,670.3 806.6,678.8 807.0,686.0 807.3,686.0 807.6,686.0 808.0,674.4 808.3,666.7 808.7,679.6 809.0,676.1 809.3,680.9 809.7,673.3 810.0,682.4 810.4,678.8 810.7,675.2 811.0,672.8 811.4,669.6 811.7,667.2 812.1,667.3 812.4,673.6 812.7,664.2 813.1,678.5 813.4,665.7 813.8,670.2 814.1,659.7 814.4,657.2 814.8,670.4 815.1,650.7 815.5,640.8 815.8,641.9 816.1,642.8 816.5,661.5 816.8,647.4 817.2,651.9 817.5,636.7 817.8,644.6 818.2,647.9 818.5,655.4 818.9,637.3 819.2,645.8 819.5,641.5 819.9,629.5 820.2,637.2 820.6,634.8 820.9,626.1 821.2,640.0 821.6,638.6 821.9,632.9 822.3,628.8 822.6,649.8 822.9,639.0 823.3,642.1 823.6,644.1 824.0,630.4 824.3,642.2 824.6,634.9 825.0,637.6 825.3,638.8 825.7,639.1 826.0,646.4 826.3,640.0 826.7,634.4 827.0,631.7 827.4,635.7 827.7,620.9 828.0,621.3 828.4,619.6 828.7,611.3 829.1,612.5 829.4,607.4 829.7,623.3 830.1,614.8 830.4,606.2 830.8,597.2 831.1,607.2 831.4,594.4 831.8,586.1 832.1,585.3 832.5,582.3 832.8,583.3 833.1,568.6 833.5,580.9 833.8,556.0 834.2,563.4 834.5,549.1 834.8,562.6 835.2,543.2 835.5,541.6 835.9,547.1 836.2,547.0 836.5,530.8 836.9,534.1 837.2,523.9 837.6,532.4 837.9,530.3 838.2,529.5 838.6,526.8 838.9,529.6 839.3,525.4 839.6,532.6 839.9,539.7 840.3,520.1 840.6,525.6 841.0,524.4 841.3,529.1 841.6,520.2 842.0,528.8 842.3,524.0 842.7,537.9 843.0,534.4 843.3,533.4 843.7,535.9 844.0,532.7 844.4,523.5 844.7,537.3 845.0,537.9 845.4,535.0 845.7,545.4 846.1,548.1 846.4,527.5 846.7,528.0 847.1,543.7 847.4,540.5 847.8,527.2 848.1,522.2 848.4,522.0 848.8,522.0 849.1,522.0 849.5,524.3 849.8,522.0 850.1,522.0 850.5,532.8 850.8,522.0 851.2,524.4 851.5,531.6 851.8,535.2 852.2,529.2 852.5,534.5 852.9,528.3 853.2,545.8 853.5,538.5 853.9,527.9 854.2,538.3 854.6,549.0 854.9,552.4 855.2,563.6 855.6,561.3 855.9,549.3 856.3,554.0 856.6,547.5 856.9,560.1 857.3,561.1 857.6,577.6 858.0,566.1 858.3,555.9 858.6,566.9 859.0,574.6 859.3,568.0 859.7,576.7 860.0,584.5 860.3,592.9 860.7,593.7 861.0,589.4 861.4,605.5 861.7,602.8 862.0,608.5 862.4,606.5 862.7,614.2 863.1,623.7 863.4,609.7 863.7,624.3 864.1,632.6 864.4,628.6 864.8,636.5 865.1,630.8 865.4,649.1 865.8,651.6 866.1,645.5 866.5,630.6 866.8,639.5 867.1,656.0 867.5,665.9 867.8,660.3 868.2,669.0 868.5,659.8 868.8,667.2 869.2,671.9 869.5,676.5 869.9,666.2 870.2,685.4 870.5,689.9 870.9,675.3 871.2,675.8 871.6,688.2 871.9,681.9 872.2,671.3 872.6,689.0 872.9,684.6 873.3,680.5 873.6,701.0 873.9,688.7 874.3,685.8 874.6,691.4 875.0,683.3 875.3,686.9 875.6,692.6 876.0,688.3 876.3,690.8 876.7,705.7 877.0,703.9 877.3,703.7 877.7,702.1 878.0,701.8 878.4,705.6 878.7,694.3 879.0,706.5 879.4,687.0 879.7,693.9 880.1,683.9 880.4,690.0 880.7,694.2 881.1,701.0 881.4,687.6 881.8,692.5 882.1,690.3 882.4,686.9 882.8,683.5 883.1,692.6 883.5,683.0 883.8,691.5 884.1,691.7 884.5,687.3 884.8,688.1 885.2,684.1 885.5,704.8 885.8,684.0 886.2,703.5 886.5,696.7 886.9,690.2 887.2,683.4 887.5,699.1 887.9,702.1 888.2,686.4 888.6,693.2 888.9,700.4 889.2,694.2 889.6,701.0 889.9,686.3 890.3,693.5 890.6,682.1 890.9,701.0 891.3,682.8 891.6,675.8 892.0,686.0 892.3,683.5 892.6,698.5 893.0,680.9 893.3,682.6 893.7,687.4 894.0,693.0 894.3,681.5 894.7,689.8 895.0,687.4 895.4,682.4 895.7,683.7 896.0,682.2 896.4,675.0 896.7,691.8 897.1,676.0 897.4,694.7 897.7,694.5 898.1,684.6 898.4,680.2 898.8,684.4 899.1,689.3 899.4,693.1 899.8,688.8 900.1,694.6 900.5,682.1 900.8,687.1 901.1,675.9 901.5,696.0 901.8,693.4 902.2,689.3 902.5,696.0 902.8,691.3 903.2,673.1 903.5,682.8 903.9,673.4 904.2,688.5 904.5,697.9 904.9,681.8 905.2,684.8 905.6,682.8 905.9,683.8 906.2,683.1 906.6,688.3 906.9,673.4 907.3,695.1 907.6,681.4 907.9,691.0 908.3,699.1 908.6,696.3 909.0,686.6 909.3,692.5 909.6,697.3 910.0,703.3 910.3,713.5 910.7,698.5 911.0,713.4 911.3,714.0 911.7,714.0 912.0,712.0 912.4,712.2 912.7,699.2 913.0,697.1 913.4,694.5 913.7,704.3 914.1,681.0 914.4,701.2 914.7,690.3 915.1,688.9 915.4,686.4 915.8,685.2 916.1,702.2 916.4,703.6 916.8,714.0 917.1,708.5 917.5,714.0 917.8,736.0 918.1,726.5 918.5,720.3 918.8,717.2 919.2,710.6 919.5,709.8 919.8,709.2 920.2,700.4 920.5,685.6 920.9,695.2 921.2,690.4 921.5,700.6 921.9,713.7 922.2,701.6 922.6,692.5 922.9,681.5 923.2,681.0 923.6,678.2 923.9,692.8 924.3,679.2 924.6,685.2 924.9,680.2 925.3,684.0 925.6,691.8 926.0,674.8 926.3,678.1 926.6,675.6 927.0,689.0 927.3,674.9 927.7,673.1 928.0,673.7 928.3,675.4 928.7,690.3 929.0,699.2 929.4,681.3 929.7,693.4 930.0,688.9 930.4,680.5 930.7,685.4 931.1,686.9 931.4,684.8 931.7,698.0 932.1,674.4 932.4,689.0 932.8,686.2 933.1,678.8 933.4,683.6 933.8,685.7 934.1,681.6 934.5,683.3 934.8,682.7 935.1,664.5 935.5,686.9 935.8,690.1 936.2,679.8 936.5,669.5 936.8,642.0 937.2,642.0 937.5,628.7 937.9,623.4 938.2,632.0 938.5,614.8 938.9,616.5 939.2,603.0 939.6,615.7 939.9,614.2 940.2,607.5 940.6,605.4 940.9,618.5 941.3,595.9 941.6,592.7 941.9,591.3 942.3,604.3 942.6,605.8 943.0,593.2 943.3,582.7 943.6,582.6 944.0,593.2 944.3,577.5 944.7,593.2 945.0,590.7 945.3,579.2 945.7,579.3 946.0,578.4 946.4,581.9 946.7,563.9 947.0,576.5 947.4,563.0 947.7,559.1 948.1,560.9 948.4,559.5 948.7,555.4 949.1,550.6 949.4,554.6 949.8,572.0 950.1,573.7 950.4,562.9 950.8,567.0 951.1,552.9 951.5,553.0 951.8,552.7 952.1,542.0 952.5,541.0 952.8,549.8 953.2,545.6 953.5,535.7 953.8,543.8 954.2,536.2 954.5,544.4 954.9,538.1 955.2,534.0 955.5,536.6 955.9,530.7 956.2,525.1 956.6,524.7 956.9,527.3 957.2,525.9 957.6,524.4 957.9,513.0 958.3,513.0 958.6,513.0 958.9,519.6 959.3,518.6 959.6,519.8 960.0,533.9 960.3,531.3 960.6,524.4 961.0,543.8 961.3,541.1 961.7,533.5 962.0,546.6 962.3,537.2 962.7,547.8 963.0,535.9 963.4,527.1 963.7,527.3 964.0,522.5 964.4,525.2 964.7,524.4 965.1,523.1 965.4,519.1 965.7,515.5 966.1,528.2 966.4,516.8 966.8,533.4 967.1,539.4 967.4,534.1 967.8,530.2 968.1,534.7 968.5,534.5 968.8,531.7 969.1,532.3 969.5,526.0 969.8,541.7 970.2,535.1 970.5,544.6 970.8,541.1 971.2,548.0 971.5,549.6 971.9,555.0 972.2,561.6 972.5,560.1 972.9,554.8 973.2,555.1 973.6,573.7 973.9,559.8 974.2,560.4 974.6,575.3 974.9,572.2 975.3,571.1 975.6,567.2 975.9,586.7 976.3,578.1 976.6,578.8 977.0,574.3 977.3,566.7 977.6,567.7 978.0,585.1 978.3,586.3 978.7,581.9 979.0,578.3 979.3,575.7 979.7,588.5 980.0,586.5 980.4,607.7 980.7,615.1 981.0,627.3 981.4,624.9 981.7,620.1 982.1,623.6 982.4,621.1 982.7,633.6 983.1,640.6 983.4,652.4 983.8,654.3 984.1,662.8 984.4,667.4 984.8,676.4 985.1,683.1 985.5,666.5 985.8,672.6 986.1,666.0 986.5,688.6 986.8,689.0 987.2,684.9 987.5,670.9 987.8,681.7 988.2,678.0 988.5,680.8 988.9,681.8 989.2,685.2 989.5,677.2 989.9,685.2 990.2,678.6 990.6,672.8 990.9,673.0 991.2,668.3 991.6,674.6 991.9,664.8 992.3,666.7 992.6,659.0 992.9,650.7 993.3,665.6 993.6,651.2 994.0,666.3 994.3,667.6 994.6,653.9 995.0,661.2 995.3,666.3 995.7,665.5 996.0,665.9 996.3,680.7 996.7,676.9 997.0,682.2 997.4,676.5 997.7,685.4 998.0,678.7 998.4,685.7 998.7,692.1 999.1,686.9 999.4,684.3 999.7,679.1 1000.1,687.7 1000.4,690.0 1000.8,686.9 1001.1,687.1 1001.4,696.6 1001.8,702.6 1002.1,692.5 1002.5,693.0 1002.8,690.6 1003.1,672.8 1003.5,687.1 1003.8,681.6 1004.2,696.7 1004.5,681.5 1004.8,678.2 1005.2,681.6 1005.5,685.7 1005.9,680.4 1006.2,679.9 1006.5,672.1 1006.9,677.7 1007.2,684.8 1007.6,697.2 1007.9,687.4 1008.2,686.0 1008.6,692.7 1008.9,689.4 1009.3,694.8 1009.6,689.1 1009.9,682.0 1010.3,686.5 1010.6,685.6 1011.0,687.8 1011.3,686.6 1011.6,676.6 1012.0,667.0 1012.3,673.5 1012.7,662.4 1013.0,674.3 1013.3,671.1 1013.7,658.1 1014.0,671.3 1014.4,671.2 1014.7,663.3 1015.0,672.7 1015.4,672.3 1015.7,649.7 1016.1,665.6 1016.4,659.1 1016.7,656.2 1017.1,657.6 1017.4,643.6 1017.8,641.9 1018.1,642.6 1018.4,644.1 1018.8,648.7 1019.1,639.8 1019.5,641.6 1019.8,652.6 1020.1,648.3 1020.5,652.8 1020.8,638.4 1021.2,646.7 1021.5,648.9 1021.8,653.4 1022.2,647.6 1022.5,658.3 1022.9,651.1 1023.2,651.6 1023.5,653.5 1023.9,659.4 1024.2,651.7 1024.6,664.5 1024.9,662.2 1025.2,660.5 1025.6,662.5 1025.9,665.8 1026.3,672.6 1026.6,675.1 1026.9,672.5 1027.3,679.1 1027.6,673.7 1028.0,683.8 1028.3,678.7 1028.6,666.8 1029.0,693.0 1029.3,687.4 1029.7,677.8 1030.0,687.9 1030.3,684.7 1030.7,706.4 1031.0,697.8 1031.4,684.2 1031.7,700.4 1032.0,694.1 1032.4,711.0 1032.7,695.9 1033.1,690.4 1033.4,707.3 1033.7,704.8 1034.1,711.0 1034.4,691.2 1034.8,707.2 1035.1,711.0 1035.4,685.0 1035.8,703.4 1036.1,687.1 1036.5,701.7 1036.8,691.4 1037.1,686.1 1037.5,693.0 1037.8,686.6 1038.2,676.3 1038.5,682.2 1038.8,672.6 1039.2,666.5 1039.5,688.2 1039.9,673.9 1040.2,673.4 1040.5,681.2 1040.9,669.6 1041.2,670.5" fill="none" stroke="#ff0000" stroke-width="1.4" stroke-linejoin="miter" stroke-miterlimit="2"/>

<rect x="179" y="741" width="864" height="1" fill="#7c7c7c"/><rect x="197" y="741" width="1" height="6" fill="#767676"/><text x="197.6" y="759.8" font-size="12" fill="#a8a8a8" text-anchor="middle" transform="translate(197.6,0) scale(0.84,1) translate(-197.6,0)">3600</text><rect x="241" y="741" width="1" height="6" fill="#767676"/><text x="241.3" y="759.8" font-size="12" fill="#a8a8a8" text-anchor="middle" transform="translate(241.3,0) scale(0.84,1) translate(-241.3,0)">3800</text><rect x="285" y="741" width="1" height="6" fill="#767676"/><text x="285.1" y="759.8" font-size="12" fill="#a8a8a8" text-anchor="middle" transform="translate(285.1,0) scale(0.84,1) translate(-285.1,0)">4000</text><rect x="328" y="741" width="1" height="6" fill="#767676"/><text x="328.9" y="759.8" font-size="12" fill="#a8a8a8" text-anchor="middle" transform="translate(328.9,0) scale(0.84,1) translate(-328.9,0)">4200</text><rect x="372" y="741" width="1" height="6" fill="#767676"/><text x="372.6" y="759.8" font-size="12" fill="#a8a8a8" text-anchor="middle" transform="translate(372.6,0) scale(0.84,1) translate(-372.6,0)">4400</text><rect x="416" y="741" width="1" height="6" fill="#767676"/><text x="416.4" y="759.8" font-size="12" fill="#a8a8a8" text-anchor="middle" transform="translate(416.4,0) scale(0.84,1) translate(-416.4,0)">4600</text><rect x="460" y="741" width="1" height="6" fill="#767676"/><text x="460.1" y="759.8" font-size="12" fill="#a8a8a8" text-anchor="middle" transform="translate(460.1,0) scale(0.84,1) translate(-460.1,0)">4800</text><rect x="503" y="741" width="1" height="6" fill="#767676"/><text x="503.9" y="759.8" font-size="12" fill="#a8a8a8" text-anchor="middle" transform="translate(503.9,0) scale(0.84,1) translate(-503.9,0)">5000</text><rect x="547" y="741" width="1" height="6" fill="#767676"/><text x="547.6" y="759.8" font-size="12" fill="#a8a8a8" text-anchor="middle" transform="translate(547.6,0) scale(0.84,1) translate(-547.6,0)">5200</text><rect x="591" y="741" width="1" height="6" fill="#767676"/><text x="591.4" y="759.8" font-size="12" fill="#a8a8a8" text-anchor="middle" transform="translate(591.4,0) scale(0.84,1) translate(-591.4,0)">5400</text><rect x="635" y="741" width="1" height="6" fill="#767676"/><text x="635.1" y="759.8" font-size="12" fill="#a8a8a8" text-anchor="middle" transform="translate(635.1,0) scale(0.84,1) translate(-635.1,0)">5600</text><rect x="678" y="741" width="1" height="6" fill="#767676"/><text x="678.9" y="759.8" font-size="12" fill="#a8a8a8" text-anchor="middle" transform="translate(678.9,0) scale(0.84,1) translate(-678.9,0)">5800</text><rect x="722" y="741" width="1" height="6" fill="#767676"/><text x="722.6" y="759.8" font-size="12" fill="#a8a8a8" text-anchor="middle" transform="translate(722.6,0) scale(0.84,1) translate(-722.6,0)">6000</text><rect x="766" y="741" width="1" height="6" fill="#767676"/><text x="766.4" y="759.8" font-size="12" fill="#a8a8a8" text-anchor="middle" transform="translate(766.4,0) scale(0.84,1) translate(-766.4,0)">6200</text><rect x="810" y="741" width="1" height="6" fill="#767676"/><text x="810.1" y="759.8" font-size="12" fill="#a8a8a8" text-anchor="middle" transform="translate(810.1,0) scale(0.84,1) translate(-810.1,0)">6400</text><rect x="853" y="741" width="1" height="6" fill="#767676"/><text x="853.9" y="759.8" font-size="12" fill="#a8a8a8" text-anchor="middle" transform="translate(853.9,0) scale(0.84,1) translate(-853.9,0)">6600</text><rect x="897" y="741" width="1" height="6" fill="#767676"/><text x="897.6" y="759.8" font-size="12" fill="#a8a8a8" text-anchor="middle" transform="translate(897.6,0) scale(0.84,1) translate(-897.6,0)">6800</text><rect x="941" y="741" width="1" height="6" fill="#767676"/><text x="941.4" y="759.8" font-size="12" fill="#a8a8a8" text-anchor="middle" transform="translate(941.4,0) scale(0.84,1) translate(-941.4,0)">7000</text><rect x="985" y="741" width="1" height="6" fill="#767676"/><text x="985.1" y="759.8" font-size="12" fill="#a8a8a8" text-anchor="middle" transform="translate(985.1,0) scale(0.84,1) translate(-985.1,0)">7200</text><rect x="1028" y="741" width="1" height="6" fill="#767676"/><text x="1028.8" y="759.8" font-size="12" fill="#a8a8a8" text-anchor="middle" transform="translate(1028.8,0) scale(0.84,1) translate(-1028.8,0)">7400</text><text x="609.8" y="776" font-size="10" font-weight="bold" fill="#ff1010" text-anchor="middle" textLength="53" lengthAdjust="spacingAndGlyphs">Angstroms</text>
</svg>
</body></html>
